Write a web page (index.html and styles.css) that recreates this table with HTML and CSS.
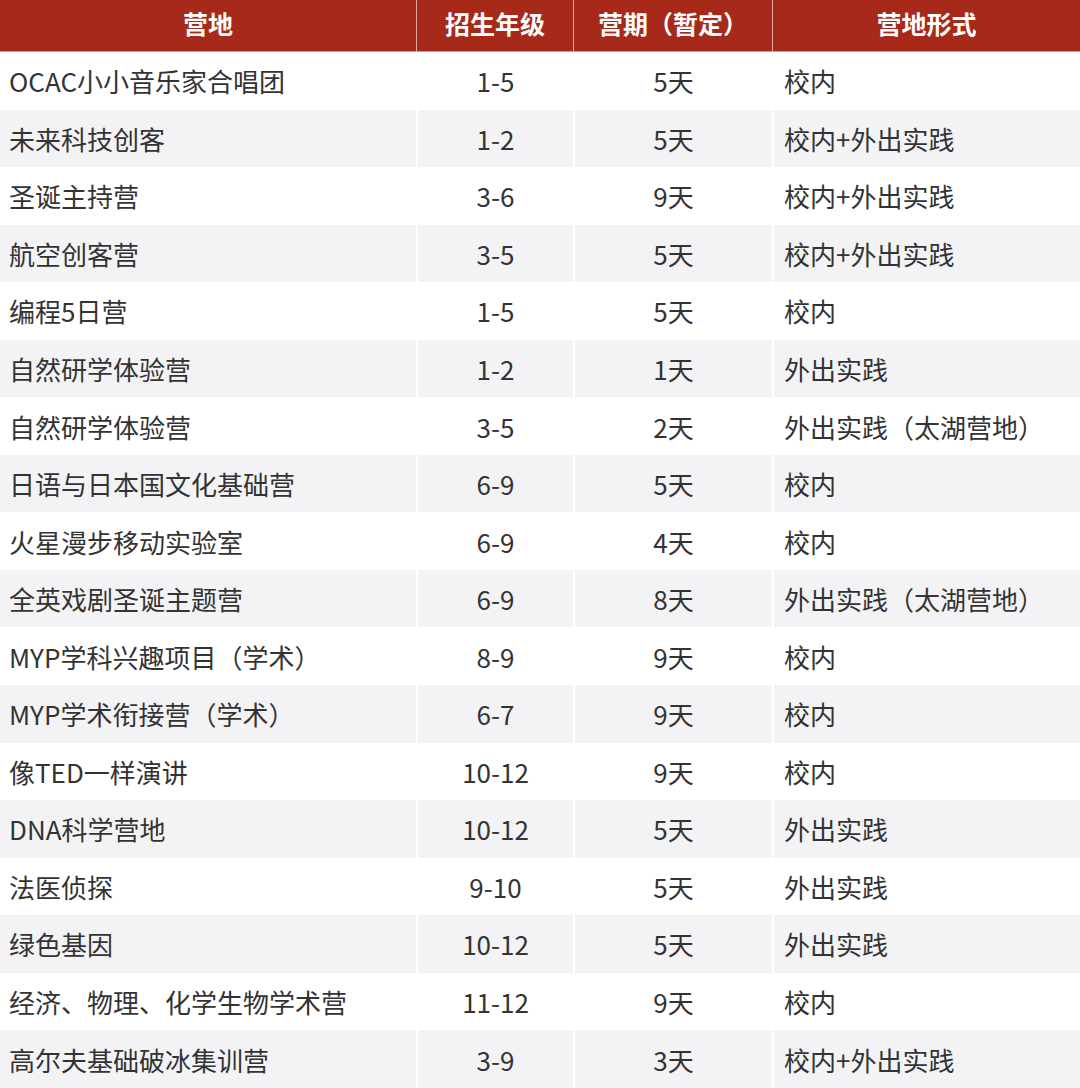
FILE: index.html
```html
<!DOCTYPE html>
<html lang="zh-CN">
<head>
<meta charset="utf-8">
<title>营地</title>
<link rel="stylesheet" href="styles.css">
</head>
<body>
<table class="camp-table">
  <colgroup>
    <col class="c-name">
    <col class="c-grade">
    <col class="c-days">
    <col class="c-form">
  </colgroup>
  <thead>
    <tr>
      <th>营地</th>
      <th>招生年级</th>
      <th>营期（暂定）</th>
      <th>营地形式</th>
    </tr>
  </thead>
  <tbody>
    <tr><td class="name">OCAC小小音乐家合唱团</td><td class="mid">1-5</td><td class="mid">5天</td><td class="form">校内</td></tr>
    <tr><td class="name">未来科技创客</td><td class="mid">1-2</td><td class="mid">5天</td><td class="form">校内+外出实践</td></tr>
    <tr><td class="name">圣诞主持营</td><td class="mid">3-6</td><td class="mid">9天</td><td class="form">校内+外出实践</td></tr>
    <tr><td class="name">航空创客营</td><td class="mid">3-5</td><td class="mid">5天</td><td class="form">校内+外出实践</td></tr>
    <tr><td class="name">编程5日营</td><td class="mid">1-5</td><td class="mid">5天</td><td class="form">校内</td></tr>
    <tr><td class="name">自然研学体验营</td><td class="mid">1-2</td><td class="mid">1天</td><td class="form">外出实践</td></tr>
    <tr><td class="name">自然研学体验营</td><td class="mid">3-5</td><td class="mid">2天</td><td class="form">外出实践（太湖营地）</td></tr>
    <tr><td class="name">日语与日本国文化基础营</td><td class="mid">6-9</td><td class="mid">5天</td><td class="form">校内</td></tr>
    <tr><td class="name">火星漫步移动实验室</td><td class="mid">6-9</td><td class="mid">4天</td><td class="form">校内</td></tr>
    <tr><td class="name">全英戏剧圣诞主题营</td><td class="mid">6-9</td><td class="mid">8天</td><td class="form">外出实践（太湖营地）</td></tr>
    <tr><td class="name">MYP学科兴趣项目（学术）</td><td class="mid">8-9</td><td class="mid">9天</td><td class="form">校内</td></tr>
    <tr><td class="name">MYP学术衔接营（学术）</td><td class="mid">6-7</td><td class="mid">9天</td><td class="form">校内</td></tr>
    <tr><td class="name">像TED一样演讲</td><td class="mid">10-12</td><td class="mid">9天</td><td class="form">校内</td></tr>
    <tr><td class="name">DNA科学营地</td><td class="mid">10-12</td><td class="mid">5天</td><td class="form">外出实践</td></tr>
    <tr><td class="name">法医侦探</td><td class="mid">9-10</td><td class="mid">5天</td><td class="form">外出实践</td></tr>
    <tr><td class="name">绿色基因</td><td class="mid">10-12</td><td class="mid">5天</td><td class="form">外出实践</td></tr>
    <tr><td class="name">经济、物理、化学生物学术营</td><td class="mid">11-12</td><td class="mid">9天</td><td class="form">校内</td></tr>
    <tr><td class="name">高尔夫基础破冰集训营</td><td class="mid">3-9</td><td class="mid">3天</td><td class="form">校内+外出实践</td></tr>
  </tbody>
</table>
</body>
</html>
```

FILE: styles.css
```css
html, body {
  margin: 0;
  padding: 0;
  background: #ffffff;
}

body {
  font-family: "Noto Sans CJK SC", "Noto Sans", sans-serif;
  color: #333333;
  overflow: hidden;
}

.camp-table {
  width: 1080px;
  table-layout: fixed;
  border-collapse: separate;
  border-spacing: 0;
}

.c-name { width: 416px; }
.c-grade { width: 157px; }
.c-days { width: 199px; }
.c-form { width: 308px; }

.camp-table thead th {
  height: 52px;
  padding: 0 0 5px 0;
  box-sizing: border-box;
  background: #a7291a;
  color: #ffffff;
  font-size: 25px;
  font-weight: 700;
  text-align: center;
  vertical-align: middle;
  border-bottom: 1px solid #d89a8f;
  border-left: 1px solid #e0a79c;
}

.camp-table thead th:first-child {
  border-left: none;
}

.camp-table tbody td {
  height: 57.56px;
  padding: 0;
  box-sizing: border-box;
  font-size: 26px;
  font-weight: 400;
  vertical-align: middle;
  white-space: nowrap;
  border-left: 2px solid #ffffff;
}

.camp-table tbody td:first-child {
  border-left: none;
}

.camp-table tbody tr:nth-child(even) td {
  background: #f3f3f5;
}

.camp-table td.name {
  text-align: left;
  padding-left: 9px;
}

.camp-table td.mid {
  text-align: center;
}

.camp-table td.form {
  text-align: left;
  padding-left: 10px;
}
```
